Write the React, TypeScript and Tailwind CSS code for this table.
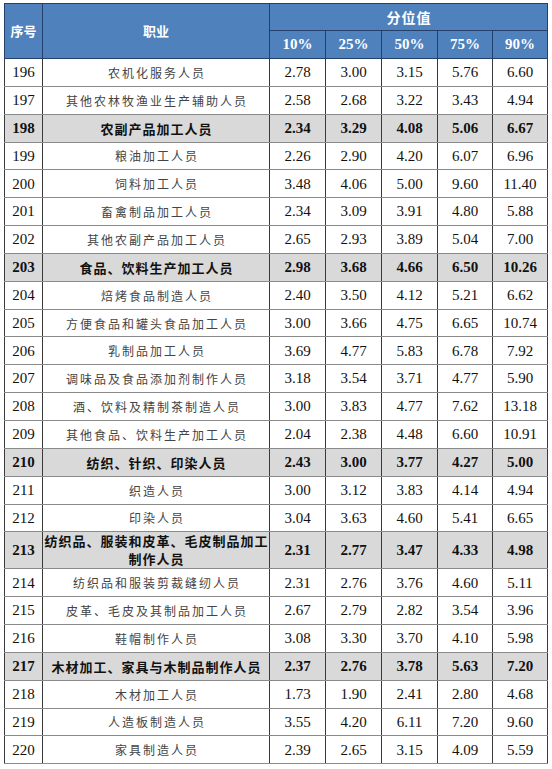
import React from "react";

type Row = { id: string; name: React.ReactNode; v: string[]; bold?: boolean; tall?: boolean };

const rows: Row[] = [
  { id: "196", name: "农机化服务人员", v: ["2.78", "3.00", "3.15", "5.76", "6.60"] },
  { id: "197", name: "其他农林牧渔业生产辅助人员", v: ["2.58", "2.68", "3.22", "3.43", "4.94"] },
  { id: "198", name: "农副产品加工人员", v: ["2.34", "3.29", "4.08", "5.06", "6.67"], bold: true },
  { id: "199", name: "粮油加工人员", v: ["2.26", "2.90", "4.20", "6.07", "6.96"] },
  { id: "200", name: "饲料加工人员", v: ["3.48", "4.06", "5.00", "9.60", "11.40"] },
  { id: "201", name: "畜禽制品加工人员", v: ["2.34", "3.09", "3.91", "4.80", "5.88"] },
  { id: "202", name: "其他农副产品加工人员", v: ["2.65", "2.93", "3.89", "5.04", "7.00"] },
  { id: "203", name: "食品、饮料生产加工人员", v: ["2.98", "3.68", "4.66", "6.50", "10.26"], bold: true },
  { id: "204", name: "焙烤食品制造人员", v: ["2.40", "3.50", "4.12", "5.21", "6.62"] },
  { id: "205", name: "方便食品和罐头食品加工人员", v: ["3.00", "3.66", "4.75", "6.65", "10.74"] },
  { id: "206", name: "乳制品加工人员", v: ["3.69", "4.77", "5.83", "6.78", "7.92"] },
  { id: "207", name: "调味品及食品添加剂制作人员", v: ["3.18", "3.54", "3.71", "4.77", "5.90"] },
  { id: "208", name: "酒、饮料及精制茶制造人员", v: ["3.00", "3.83", "4.77", "7.62", "13.18"] },
  { id: "209", name: "其他食品、饮料生产加工人员", v: ["2.04", "2.38", "4.48", "6.60", "10.91"] },
  { id: "210", name: "纺织、针织、印染人员", v: ["2.43", "3.00", "3.77", "4.27", "5.00"], bold: true },
  { id: "211", name: "织造人员", v: ["3.00", "3.12", "3.83", "4.14", "4.94"] },
  { id: "212", name: "印染人员", v: ["3.04", "3.63", "4.60", "5.41", "6.65"] },
  {
    id: "213",
    name: (
      <>
        纺织品、服装和皮革、毛皮制品加工
        <br />
        制作人员
      </>
    ),
    v: ["2.31", "2.77", "3.47", "4.33", "4.98"],
    bold: true,
    tall: true,
  },
  { id: "214", name: "纺织品和服装剪裁缝纫人员", v: ["2.31", "2.76", "3.76", "4.60", "5.11"] },
  { id: "215", name: "皮革、毛皮及其制品加工人员", v: ["2.67", "2.79", "2.82", "3.54", "3.96"] },
  { id: "216", name: "鞋帽制作人员", v: ["3.08", "3.30", "3.70", "4.10", "5.98"] },
  { id: "217", name: "木材加工、家具与木制品制作人员", v: ["2.37", "2.76", "3.78", "5.63", "7.20"], bold: true },
  { id: "218", name: "木材加工人员", v: ["1.73", "1.90", "2.41", "2.80", "4.68"] },
  { id: "219", name: "人造板制造人员", v: ["3.55", "4.20", "6.11", "7.20", "9.60"] },
  { id: "220", name: "家具制造人员", v: ["2.39", "2.65", "3.15", "4.09", "5.59"] },
];

const serif = "font-['Liberation_Serif','Times_New_Roman',serif]";
const cjk = "font-['Noto_Sans_CJK_SC',sans-serif]";
const cell = "p-0 text-center align-middle border-x border-x-[#3a3a3a] border-y border-y-[#8a8a8a]";
const hcell = "p-0 text-center align-middle border border-[#24406b] text-white";

export default function App() {
  return (
    <div className="w-[552px] h-[769px] bg-white pt-[3px] pl-[4px]">
      <table className="table-fixed border-collapse w-[543px]">
        <colgroup>
          <col className="w-[38px]" />
          <col className="w-[227px]" />
          <col className="w-[56px]" />
          <col className="w-[56px]" />
          <col className="w-[56px]" />
          <col className="w-[55px]" />
          <col className="w-[55px]" />
        </colgroup>
        <thead>
          <tr className="h-[27px] bg-[#4f81bd]">
            <th rowSpan={2} className={`${hcell} ${cjk} text-[13px] font-bold`}>
              序号
            </th>
            <th rowSpan={2} className={`${hcell} ${cjk} text-[13px] font-bold`}>
              职业
            </th>
            <th colSpan={5} className={`${hcell} ${cjk} text-[14px] font-bold tracking-[1px] pl-[1px]`}>
              分位值
            </th>
          </tr>
          <tr className="h-[28px] bg-[#4f81bd]">
            {["10%", "25%", "50%", "75%", "90%"].map((p) => (
              <th key={p} className={`${hcell} ${serif} text-[15px] font-bold`}>
                {p}
              </th>
            ))}
          </tr>
        </thead>
        <tbody>
          {rows.map((r) => (
            <tr
              key={r.id}
              className={`${r.tall ? "h-[37px]" : "h-[27.85px]"} ${r.bold ? "bg-[#d9d9d9]" : "bg-white"}`}
            >
              <td className={`${cell} ${serif} text-[15px] text-[#111] ${r.bold ? "font-bold" : ""}`}>{r.id}</td>
              <td
                className={`${cell} ${cjk} ${r.tall ? "leading-[18px]" : "leading-[17px]"} ${
                  r.bold
                    ? "text-[13px] tracking-[1px] pl-[1px] font-bold text-[#111]"
                    : "text-[12px] tracking-[2px] pl-[2px] text-[#444]"
                }`}
              >
                {r.name}
              </td>
              {r.v.map((x, i) => (
                <td key={i} className={`${cell} ${serif} text-[15px] text-[#111] ${r.bold ? "font-bold" : ""}`}>
                  {x}
                </td>
              ))}
            </tr>
          ))}
        </tbody>
      </table>
    </div>
  );
}
